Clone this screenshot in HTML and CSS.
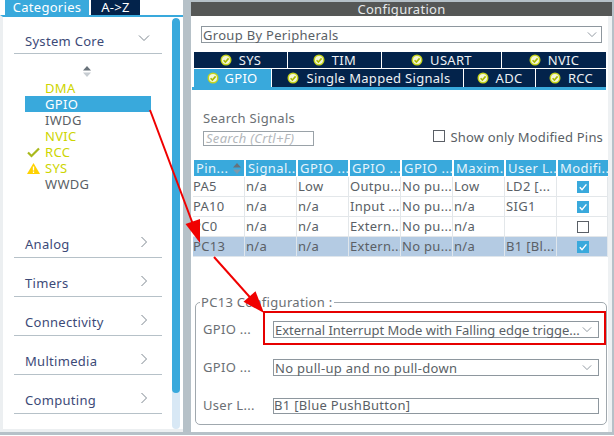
FILE: index.html
```html
<!DOCTYPE html>
<html lang="en">
<head>
<meta charset="utf-8">
<title>Pinout configuration</title>
<link rel="stylesheet" href="styles.css">
</head>
<body>
<svg width="0" height="0" class="defs">
  <symbol id="ok" viewBox="0 0 12 12"><circle cx="6" cy="6" r="5.5" fill="#c5d41c"/><circle cx="6" cy="6" r="4" fill="#f4f6d8"/><path d="M3.6 6.2 5.4 8 8.6 4.4" fill="none" stroke="#a9b800" stroke-width="1.6"/></symbol>
  <symbol id="down" viewBox="0 0 12 8"><path d="M1 1.5 6 6.5 11 1.5" fill="none" stroke="#7d8790" stroke-width="1"/></symbol>
  <symbol id="right" viewBox="0 0 8 12"><path d="M1.5 1 6.5 6 1.5 11" fill="none" stroke="#7d8790" stroke-width="1"/></symbol>
  <symbol id="tick" viewBox="0 0 12 12"><rect width="12" height="12" fill="#39a9dc"/><path d="M2.8 6.2 5 8.6 9.4 3.4" fill="none" stroke="#fff" stroke-width="1.4"/></symbol>
</svg>
<div class="app">
  <aside class="side">
    <div class="side-tabs"><span class="stab on">Categories</span><span class="stab">A-&gt;Z</span></div>
    <div class="side-body">
      <div class="cats">
        <div class="cat first"><span>System Core</span><svg class="chev-d"><use href="#down"/></svg></div>
        <div class="sort"><svg width="8" height="11" viewBox="0 0 8 11"><path d="M4 0 8 4.500H0Z" fill="#68727a"/><path d="M4 11 8 6.500H0Z" fill="#c6ccd1"/></svg></div>
        <ul class="items">
          <li class="y">DMA</li>
          <li class="sel">GPIO</li>
          <li>IWDG</li>
          <li class="y">NVIC</li>
          <li class="y"><svg class="mark" viewBox="0 0 13 10"><path d="M1 5 4.500 8.500 12 1" fill="none" stroke="#a9b91c" stroke-width="2.200"/></svg>RCC</li>
          <li class="y"><svg class="mark" viewBox="0 0 13 11"><path d="M6.500 0 13 11H0Z" fill="#ffd200"/><path d="M6.500 3.500V7.500M6.500 8.500V10" stroke="#fff" stroke-width="1.300"/></svg>SYS</li>
          <li>WWDG</li>
        </ul>
        <div class="cat closed gap"><span>Analog</span><svg class="chev-r"><use href="#right"/></svg></div>
        <div class="cat closed"><span>Timers</span><svg class="chev-r"><use href="#right"/></svg></div>
        <div class="cat closed"><span>Connectivity</span><svg class="chev-r"><use href="#right"/></svg></div>
        <div class="cat closed"><span>Multimedia</span><svg class="chev-r"><use href="#right"/></svg></div>
        <div class="cat closed"><span>Computing</span><svg class="chev-r"><use href="#right"/></svg></div>
      </div>
      <div class="scroll"><div class="thumb"></div></div>
    </div>
  </aside>
  <main class="main">
    <h1 class="title">Configuration</h1>
    <div class="content">
      <div class="select group"><span>Group By Peripherals</span><svg class="sel-chev"><use href="#down"/></svg></div>
      <div class="ctabs r1">
        <div class="ctab"><svg class="ok"><use href="#ok"/></svg>SYS</div>
        <div class="ctab"><svg class="ok"><use href="#ok"/></svg>TIM</div>
        <div class="ctab"><svg class="ok"><use href="#ok"/></svg>USART</div>
        <div class="ctab"><svg class="ok"><use href="#ok"/></svg>NVIC</div>
      </div>
      <div class="ctabs r2">
        <div class="ctab on"><svg class="ok"><use href="#ok"/></svg>GPIO</div>
        <div class="ctab"><svg class="ok"><use href="#ok"/></svg>Single Mapped Signals</div>
        <div class="ctab"><svg class="ok"><use href="#ok"/></svg>ADC</div>
        <div class="ctab"><svg class="ok"><use href="#ok"/></svg>RCC</div>
      </div>
      <div class="tabline"></div>
      <div class="search-row">
        <div class="search">
          <label class="search-label">Search Signals</label>
          <div class="search-input">Search (Crtl+F)</div>
        </div>
        <div class="only"><span class="box"></span>Show only Modified Pins</div>
      </div>
      <div class="grid">
        <div class="head sorted">Pin...<svg width="8" height="11" viewBox="0 0 8 11"><path d="M4 0 8 4.500H0Z" fill="#68727a"/><path d="M4 11 8 6.500H0Z" fill="#7f99ab"/></svg></div>
        <div class="head">Signal...</div><div class="head">GPIO ...</div><div class="head">GPIO ...</div><div class="head">GPIO ...</div><div class="head">Maxim...</div><div class="head">User L...</div><div class="head">Modifi...</div>

        <div class="cell pincol">PA5</div><div class="cell">n/a</div><div class="cell">Low</div><div class="cell">Outpu...</div><div class="cell">No pu...</div><div class="cell">Low</div><div class="cell">LD2 [...</div><div class="cell mid"><svg class="tick"><use href="#tick"/></svg></div>

        <div class="cell pincol">PA10</div><div class="cell">n/a</div><div class="cell">n/a</div><div class="cell">Input ...</div><div class="cell">No pu...</div><div class="cell">n/a</div><div class="cell">SIG1</div><div class="cell mid"><svg class="tick"><use href="#tick"/></svg></div>

        <div class="cell pincol">PC0</div><div class="cell">n/a</div><div class="cell">n/a</div><div class="cell">Extern...</div><div class="cell">No pu...</div><div class="cell">n/a</div><div class="cell"></div><div class="cell mid"><span class="box"></span></div>

        <div class="cell pincol hl">PC13</div><div class="cell hl">n/a</div><div class="cell hl">n/a</div><div class="cell hl">Extern...</div><div class="cell hl">No pu...</div><div class="cell hl">n/a</div><div class="cell hl">B1 [Bl...</div><div class="cell hl mid"><svg class="tick"><use href="#tick"/></svg></div>
      </div>
      <fieldset class="pin">
        <legend>PC13 Configuration :</legend>
        <div class="frow r-a"><label>GPIO ...</label><div class="select"><span class="tight">External Interrupt Mode with Falling edge trigge...</span><svg class="sel-chev"><use href="#down"/></svg></div></div>
        <div class="frow r-b"><label>GPIO ...</label><div class="select"><span>No pull-up and no pull-down</span><svg class="sel-chev"><use href="#down"/></svg></div></div>
        <div class="frow r-c"><label>User L...</label><div class="select text"><span>B1 [Blue PushButton]</span></div></div>
      </fieldset>
    </div>
  </main>
</div>
<div class="redbox"></div>
<svg class="arrows" width="614" height="436" viewBox="0 0 614 436">
  <path d="M150 110 197 235" stroke="#f00000" stroke-width="2" fill="none"/>
  <path d="M200 243 185.500 224 200 219Z" fill="#f00000"/>
  <path d="M214 257 256 304" stroke="#f00000" stroke-width="2" fill="none"/>
  <path d="M264 313 243.500 301.800 255.500 291.200Z" fill="#f00000"/>
</svg>
</body>
</html>
```
FILE: styles.css
```css
* { box-sizing: border-box; }
html, body { margin: 0; padding: 0; }
body {
  width: 614px; height: 436px; overflow: hidden; position: relative;
  background: #fff;
  font-family: "Noto Sans", sans-serif;
  font-size: 13px;
  letter-spacing: .3px;
  color: #5a5f66;
}
.defs { position: absolute; }
.app { display: flex; height: 435px; background: #b6c1c8; padding-bottom: 3px; }

.side { width: 183px; display: flex; flex-direction: column; background: #fff; }
.side-tabs { height: 15px; display: flex; gap: 2px; margin-left: 5px; background: #fff; }
.stab { width: 49px; height: 15px; background: #03234b; color: #fff; text-align: center; line-height: 14px; }
.stab.on { width: 84px; background: #39a9dc; }
.side-body { flex: 1; display: flex; padding: 1px 3px 0 0; border-top: 2px solid #39a9dc; border-left: 3px solid #eceff1; border-bottom: 3px solid #eceff1; }
.cats { width: 169px; }
.cat { display: flex; justify-content: space-between; align-items: center; height: 39px; margin-left: 11px; width: 148px; border-bottom: 1px solid #b6c1c8; padding: 12px 14px 0 11px; color: #3c4a78; }
.cat.first { height: 36px; padding: 10px 12px 0 11px; }
.chev-d { width: 12px; height: 8px; margin-top: -6px; }
.chev-r { width: 8px; height: 12px; margin-top: -4px; }
.sort { height: 11px; margin: 12px 0 0 80px; display: flex; }
.items { list-style: none; margin: 3px 0 0 22px; padding: 0; }
.items li { height: 16px; width: 126px; line-height: 16px; padding-left: 20px; position: relative; color: #5a5f66; }
.items li.y { color: #cdd500; }
.items li.sel { background: #39a9dc; color: #fff; }
.mark { position: absolute; left: 2px; top: 3px; width: 13px; height: 11px; }
.gap { margin-top: 27px; }
.scroll { width: 8px; background: #d8e8f5; border-radius: 4px; overflow: hidden; }
.thumb { height: 375px; background: #39a9dc; border-radius: 4px; }

.main { width: 421px; margin-left: 8px; padding-top: 2px; display: flex; flex-direction: column; }
.title { margin: 0; height: 14px; background: #555756; color: #e6e9ea; font-size: 13px; font-weight: 400; text-align: center; line-height: 14px; }
.content { flex: 1; background: #fff; padding: 10px 0 0 1px; border-right: 4px solid #eef1f3; display: flex; flex-direction: column; }
.select { height: 17px; border: 1px solid #8e979e; display: flex; align-items: center; justify-content: space-between; padding: 0 6px 0 1px; background: #fff; }
.select span { white-space: nowrap; }
.select .tight { letter-spacing: -.02px; }
.sel-chev { width: 10px; height: 7px; flex: none; }
.group { width: 401px; margin-left: 9px; padding-right: 4px; }
.ctabs { display: flex; gap: 1px; margin-left: 2px; color: #eef1f4; }
.ctab { background: #03234b; display: flex; align-items: center; justify-content: center; gap: 7px; }
.ok { width: 12px; height: 12px; }
.r1 { margin-top: 9px; height: 16px; }
.r2 { margin-top: 1px; height: 18px; }
.r1 .ctab:nth-child(1), .r1 .ctab:nth-child(2) { width: 93px; }
.r1 .ctab:nth-child(3) { width: 119px; }
.r1 .ctab:nth-child(4) { width: 104px; }
.r2 .ctab:nth-child(1) { width: 77px; gap: 5px; }
.r2 .ctab:nth-child(2) { width: 191px; padding-left: 3px; }
.r2 .ctab:nth-child(3) { width: 71px; }
.r2 .ctab:nth-child(4) { width: 70px; }
.ctab.on { background: #39a9dc; color: #fff; }
.tabline { height: 3px; width: 414px; background: #39a9dc; }
.search-row { display: flex; justify-content: space-between; margin: 20px 5px 0 11px; height: 50px; }
.search-label { display: block; line-height: 16px; color: #6b6f74; }
.search-input { width: 111px; height: 15px; margin-top: 5px; border: 1px solid #9aa2a8; font-style: italic; color: #b3b7bb; line-height: 13px; padding-left: 2px; }
.only { display: flex; align-items: flex-start; gap: 5px; margin-top: 20px; line-height: 14px; letter-spacing: .17px; color: #5a5f66; }
.box { display: block; width: 12px; height: 12px; border: 1px solid #5a5f66; background: #fff; }
.grid { display: grid; grid-template-columns: repeat(7, 52px) 51px; grid-template-rows: 17px; grid-auto-rows: 20px; width: 415px; margin-left: 1px; }
.head { height: 16px; width: 50px; margin-left: 1px; background: #39a9dc; color: #e6f4fb; line-height: 15px; letter-spacing: .45px; padding: 0 0 0 2px; white-space: nowrap; overflow: hidden; display: flex; justify-content: space-between; align-items: center; }
.head.sorted { padding-right: 3px; }
.cell { border-right: 1px solid #e3e7ea; border-bottom: 1px solid #e3e7ea; line-height: 19px; padding-left: 1px; white-space: nowrap; overflow: hidden; }
.cell.pincol { padding-left: 0; }
.cell.hl { background: #b4cbe3; border-color: #dfe6ec; }
.mid { display: flex; align-items: center; justify-content: center; }
.tick { width: 12px; height: 12px; }
.pin { margin: 38px 0 0 3px; width: 412px; height: 130px; border: 1px solid #a0a8ae; border-radius: 5px; padding: 0 7px; }
.pin legend { padding: 0 1px; margin-left: -3px; line-height: 14px; color: #6b6f74; }
.frow { display: flex; align-items: center; justify-content: space-between; height: 17px; }
.frow label { color: #6b6f74; line-height: 17px; }
.frow .select { width: 326px; }
.r-a { margin-top: 12px; }
.r-b, .r-c { margin-top: 21px; }
.frow .text { height: 16px; padding: 0 0 2px; }
.redbox { position: absolute; left: 263px; top: 311px; width: 343px; height: 34px; border: 2px solid #e60000; }
.arrows { position: absolute; left: 0; top: 0; }
```
